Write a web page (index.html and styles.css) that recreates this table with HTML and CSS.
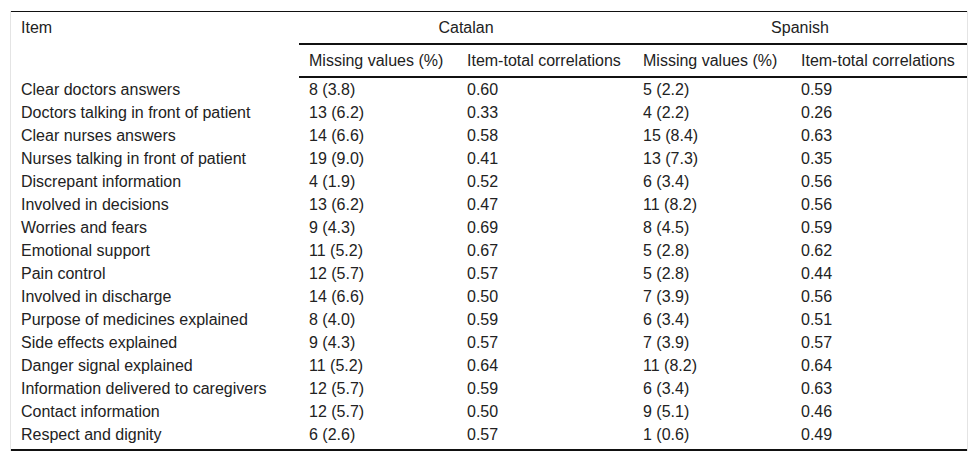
FILE: index.html
```html
<!DOCTYPE html>
<html>
<head>
<meta charset="utf-8">
<link rel="stylesheet" href="styles.css">
</head>
<body>
<div class="wrap">
<table class="tbl">
<colgroup>
<col class="w-item">
<col class="w-miss">
<col class="w-corr">
<col class="w-miss">
<col class="w-corr">
</colgroup>
<thead>
<tr class="h1">
<th rowspan="2" class="item">Item</th>
<th colspan="2" class="grp">Catalan</th>
<th colspan="2" class="grp">Spanish</th>
</tr>
<tr class="h2">
<th>Missing values (%)</th>
<th>Item-total correlations</th>
<th>Missing values (%)</th>
<th>Item-total correlations</th>
</tr>
</thead>
<tbody>
<tr><td>Clear doctors answers</td><td>8 (3.8)</td><td>0.60</td><td>5 (2.2)</td><td>0.59</td></tr>
<tr><td>Doctors talking in front of patient</td><td>13 (6.2)</td><td>0.33</td><td>4 (2.2)</td><td>0.26</td></tr>
<tr><td>Clear nurses answers</td><td>14 (6.6)</td><td>0.58</td><td>15 (8.4)</td><td>0.63</td></tr>
<tr><td>Nurses talking in front of patient</td><td>19 (9.0)</td><td>0.41</td><td>13 (7.3)</td><td>0.35</td></tr>
<tr><td>Discrepant information</td><td>4 (1.9)</td><td>0.52</td><td>6 (3.4)</td><td>0.56</td></tr>
<tr><td>Involved in decisions</td><td>13 (6.2)</td><td>0.47</td><td>11 (8.2)</td><td>0.56</td></tr>
<tr><td>Worries and fears</td><td>9 (4.3)</td><td>0.69</td><td>8 (4.5)</td><td>0.59</td></tr>
<tr><td>Emotional support</td><td>11 (5.2)</td><td>0.67</td><td>5 (2.8)</td><td>0.62</td></tr>
<tr><td>Pain control</td><td>12 (5.7)</td><td>0.57</td><td>5 (2.8)</td><td>0.44</td></tr>
<tr><td>Involved in discharge</td><td>14 (6.6)</td><td>0.50</td><td>7 (3.9)</td><td>0.56</td></tr>
<tr><td>Purpose of medicines explained</td><td>8 (4.0)</td><td>0.59</td><td>6 (3.4)</td><td>0.51</td></tr>
<tr><td>Side effects explained</td><td>9 (4.3)</td><td>0.57</td><td>7 (3.9)</td><td>0.57</td></tr>
<tr><td>Danger signal explained</td><td>11 (5.2)</td><td>0.64</td><td>11 (8.2)</td><td>0.64</td></tr>
<tr><td>Information delivered to caregivers</td><td>12 (5.7)</td><td>0.59</td><td>6 (3.4)</td><td>0.63</td></tr>
<tr><td>Contact information</td><td>12 (5.7)</td><td>0.50</td><td>9 (5.1)</td><td>0.46</td></tr>
<tr class="last"><td>Respect and dignity</td><td>6 (2.6)</td><td>0.57</td><td>1 (0.6)</td><td>0.49</td></tr>
</tbody>
</table>
</div>
</body>
</html>
```

FILE: styles.css
```css
html, body {
  margin: 0;
  padding: 0;
  background: #fff;
}
body {
  padding: 11px 10px 0 10px;
  font-family: "Liberation Sans", Arial, sans-serif;
  font-size: 16px;
  color: #222;
}
.wrap {
  width: 956px;
  border-left: 1px solid #e4e4e4;
  border-right: 1px solid #e4e4e4;
}
.tbl {
  width: 956px;
  border-collapse: collapse;
  table-layout: fixed;
  border-top: 1px solid #111;
  border-bottom: 2px solid #111;
}
.w-item { width: 288px; }
.w-miss { width: 158px; }
.w-corr { width: 176px; }
.tbl th, .tbl td {
  font-weight: normal;
  text-align: left;
  line-height: 19px;
  padding: 2px 10px;
  white-space: nowrap;
}
.tbl .h1 th {
  padding-top: 6px;
  padding-bottom: 6px;
}
.tbl th.item {
  vertical-align: top;
}
.tbl th.grp {
  text-align: center;
  border-bottom: 2px solid #111;
}
.tbl .h2 th {
  padding-top: 6px;
  padding-bottom: 6px;
  border-bottom: 2px solid #111;
}
.tbl tbody tr:first-child td {
  padding-top: 2px;
}
.tbl tr.last td {
  padding-bottom: 5px;
}
```
